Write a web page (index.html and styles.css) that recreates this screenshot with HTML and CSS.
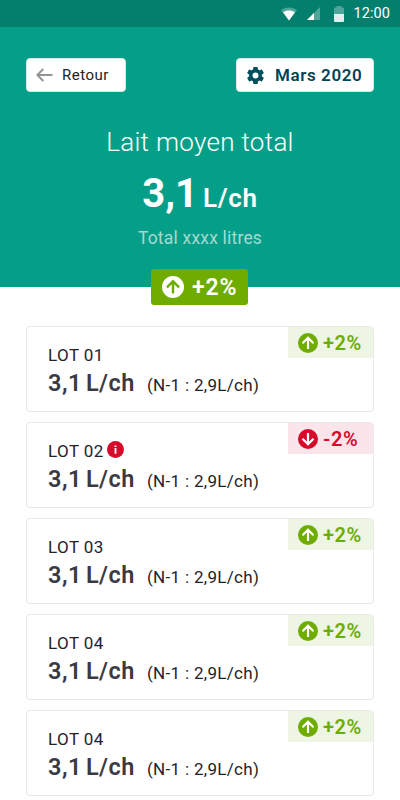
FILE: index.html
```html
<!DOCTYPE html>
<html lang="fr">
<head>
  <meta charset="UTF-8">
  <meta name="viewport" content="width=device-width, initial-scale=1.0">
  <title>Lait moyen total</title>
  <link rel="stylesheet" href="styles.css">
</head>
<body>
  <!-- Icônes partagées -->
  <svg class="sprite" width="0" height="0">
    <symbol id="up" viewBox="0 0 20 20">
      <circle cx="10" cy="10" r="10" fill="currentColor"/>
      <path d="M10 16V5M4.500 10.300L10 4.800L15.500 10.300" fill="none" stroke="var(--arrow)" stroke-width="2.200"/>
    </symbol>
    <symbol id="down" viewBox="0 0 20 20">
      <circle cx="10" cy="10" r="10" fill="currentColor"/>
      <path d="M10 4V15M4.500 9.700L10 15.200L15.500 9.700" fill="none" stroke="var(--arrow)" stroke-width="2.200"/>
    </symbol>
  </svg>

  <header class="hero">
    <div class="status-bar">
      <svg width="16" height="14" viewBox="0 0 16 14">
        <path d="M0 3.200C4.800-.5 11.200-.5 16 3.200L8 13.500z" fill="#fff" opacity=".3"/>
        <path d="M2 5.300C5.800 3 10.200 3 14 5.300L8 13.500z" fill="#fff"/>
      </svg>
      <svg class="signal" width="13" height="13" viewBox="0 0 13 13">
        <path d="M13 0V13H0z" fill="#fff" opacity=".3"/>
        <path d="M7 6V13H0z" fill="#fff"/>
      </svg>
      <svg class="battery" width="10" height="16" viewBox="0 0 10 16">
        <path d="M0 2.500Q0 1.500 1 1.500H2.500V0H7.500V1.500H9Q10 1.500 10 2.500V8H0z" fill="#fff" opacity=".3"/>
        <path d="M0 8H10V15Q10 16 9 16H1Q0 16 0 15z" fill="#fff" opacity=".88"/>
      </svg>
      <span class="clock">12:00</span>
    </div>

    <nav class="toolbar">
      <button class="btn btn-back">
        <svg width="17" height="14" viewBox="0 0 17 14">
          <path d="M16.500 7H1.500M7.300 1L1.300 7L7.300 13" fill="none" stroke="#949497" stroke-width="2"/>
        </svg>
        <span class="t-back">Retour</span>
      </button>
      <button class="btn btn-date">
        <svg width="17" height="17" viewBox="2.200 2 19.600 20">
          <path d="M19.430 12.980c.04-.32.07-.64.07-.98s-.03-.66-.07-.98l2.110-1.650c.19-.15.24-.42.12-.64l-2-3.460c-.12-.22-.39-.3-.61-.22l-2.490 1c-.52-.4-1.080-.73-1.690-.98l-.38-2.650A.49.49 0 0 0 14 2h-4c-.25 0-.46.18-.49.42l-.38 2.650c-.61.25-1.170.59-1.690.98l-2.490-1c-.23-.09-.49 0-.61.22l-2 3.460c-.13.22-.07.49.12.64l2.110 1.650c-.04.32-.07.65-.07.98s.03.66.07.98l-2.110 1.650c-.19.15-.24.42-.12.64l2 3.460c.12.22.39.3.61.22l2.490-1c.52.4 1.080.73 1.690.98l.38 2.650c.03.24.24.42.49.42h4c.25 0 .46-.18.49-.42l.38-2.650c.61-.25 1.170-.59 1.690-.98l2.490 1c.23.09.49 0 .61-.22l2-3.460c.12-.22.07-.49-.12-.64l-2.110-1.650zM12 15.500a3.500 3.500 0 1 1 0-7 3.500 3.500 0 0 1 0 7z" fill="#004f5c"/>
        </svg>
        <span class="t-date">Mars 2020</span>
      </button>
    </nav>

    <div class="summary">
      <h1><span class="t-title">Lait moyen total</span></h1>
      <p class="total"><span class="t-big">3,1</span><span class="t-unit">L/ch</span></p>
      <p class="litres"><span class="t-litres">Total xxxx litres</span></p>
    </div>

    <div class="trend">
      <svg width="22" height="22"><use href="#up"/></svg>
      <span class="t-trend">+2%</span>
    </div>
  </header>

  <main class="lots">
    <article class="lot">
      <div class="lot-info">
        <h2><span class="t-lot">LOT 01</span></h2>
        <p><strong><span class="t-val">3,1</span><span class="t-vunit">L/ch</span></strong><span class="t-prev">(N-1 : 2,9L/ch)</span></p>
      </div>
      <div class="tag"><svg width="20" height="20"><use href="#up"/></svg><span>+2%</span></div>
    </article>
    <article class="lot">
      <div class="lot-info">
        <h2><span class="t-lot">LOT 02</span>
          <svg class="info" width="17" height="17" viewBox="0 0 17 17">
            <circle cx="8.500" cy="8.500" r="8.500" fill="#d80a2c"/>
            <path d="M7.600 4.400H9.400V6H7.600zM7.600 7H9.400V12.700H7.600z" fill="#fff"/>
          </svg>
        </h2>
        <p><strong><span class="t-val">3,1</span><span class="t-vunit">L/ch</span></strong><span class="t-prev">(N-1 : 2,9L/ch)</span></p>
      </div>
      <div class="tag tag-down"><svg width="20" height="20"><use href="#down"/></svg><span>-2%</span></div>
    </article>
    <article class="lot">
      <div class="lot-info">
        <h2><span class="t-lot">LOT 03</span></h2>
        <p><strong><span class="t-val">3,1</span><span class="t-vunit">L/ch</span></strong><span class="t-prev">(N-1 : 2,9L/ch)</span></p>
      </div>
      <div class="tag"><svg width="20" height="20"><use href="#up"/></svg><span>+2%</span></div>
    </article>
    <article class="lot">
      <div class="lot-info">
        <h2><span class="t-lot">LOT 04</span></h2>
        <p><strong><span class="t-val">3,1</span><span class="t-vunit">L/ch</span></strong><span class="t-prev">(N-1 : 2,9L/ch)</span></p>
      </div>
      <div class="tag"><svg width="20" height="20"><use href="#up"/></svg><span>+2%</span></div>
    </article>
    <article class="lot">
      <div class="lot-info">
        <h2><span class="t-lot">LOT 04</span></h2>
        <p><strong><span class="t-val">3,1</span><span class="t-vunit">L/ch</span></strong><span class="t-prev">(N-1 : 2,9L/ch)</span></p>
      </div>
      <div class="tag"><svg width="20" height="20"><use href="#up"/></svg><span>+2%</span></div>
    </article>
  </main>
</body>
</html>
```
FILE: styles.css
```css
* {
  box-sizing: border-box;
}
body {
  margin: 0;
  height: 800px;
  overflow: hidden;
  background: #fff;
  color: #22222c;
  font-family: Roboto, sans-serif;
}
h1, h2, p {
  margin: 0;
  font-weight: 400;
}
svg {
  display: block;
  flex: none;
}
span {
  white-space: nowrap;
}
.sprite {
  position: absolute;
}

/* Header */
.hero {
  height: 287px;
  background: #059f89;
  color: #fff;
}
.status-bar {
  height: 27px;
  padding-right: 10px;
  background: #047f6e;
  display: flex;
  align-items: center;
  justify-content: flex-end;
}
.signal {
  margin-left: 10px;
}
.battery {
  margin: 0 9px 0 14px;
}
.clock {
  font-size: 14.5px;
  letter-spacing: 0.1px;
}
.toolbar {
  display: flex;
  justify-content: space-between;
  padding: 31px 26px 0;
}
.btn {
  height: 34px;
  padding: 0;
  border: 1px solid #d5ebe7;
  border-radius: 4px;
  background: #fff;
  font-family: inherit;
  display: flex;
  align-items: center;
  cursor: pointer;
}
.btn-back {
  width: 100px;
  padding-left: 9px;
  gap: 9px;
  color: #22222c;
  font-size: 15px;
}
.t-back {
  letter-spacing: 0.5px;
}
.btn-date {
  width: 138px;
  padding-left: 10px;
  gap: 11px;
  color: #004352;
  font-size: 17px;
  font-weight: 600;
}
.t-date {
  letter-spacing: 0.6px;
}
.summary {
  text-align: center;
}
.summary h1 {
  padding-top: 34px;
  font-size: 26px;
  font-weight: 300;
  line-height: 32px;
}
.t-title {
  letter-spacing: 0.3px;
}
.total {
  margin-top: 12px;
  line-height: 48px;
  display: flex;
  align-items: baseline;
  justify-content: center;
  gap: 5px;
}
.t-big {
  font-size: 40px;
  font-weight: 700;
}
.t-unit {
  font-size: 26px;
  font-weight: 600;
  letter-spacing: 0.7px;
}
.litres {
  margin-top: 6px;
  font-size: 17.5px;
  line-height: 20px;
  color: #a3dad1;
}
.t-litres {
  letter-spacing: 0.2px;
}
.trend {
  width: 97px;
  height: 36px;
  margin: 21px auto 0 151px;
  padding-left: 11px;
  border-radius: 3px;
  background: #6fac00;
  display: flex;
  align-items: center;
  gap: 8px;
  font-size: 23px;
  font-weight: 600;
  --arrow: #6fac00;
}
.t-trend {
  letter-spacing: 0.9px;
}

/* Lots */
.lots {
  padding: 39px 26px 0;
  display: flex;
  flex-direction: column;
  gap: 10px;
}
.lot {
  height: 86px;
  flex: none;
  border: 1px solid #e9e9ea;
  border-radius: 4px;
  overflow: hidden;
  display: flex;
  justify-content: space-between;
}
.lot-info {
  padding: 18px 0 0 21px;
}
.lot h2 {
  display: flex;
  align-items: center;
  gap: 3px;
  height: 20px;
  font-size: 17px;
  line-height: 20px;
}
.t-lot {
  letter-spacing: 0.4px;
}
.info {
  margin-top: -3px;
}
.lot p {
  display: flex;
  align-items: baseline;
  gap: 12px;
  margin-top: 4px;
  line-height: 28px;
}
.lot strong {
  display: flex;
  gap: 4px;
  color: #3a3a44;
  font-size: 23.5px;
  font-weight: 600;
  letter-spacing: 0.5px;
}
.t-prev {
  font-size: 17px;
  letter-spacing: 0.32px;
}
.tag {
  width: 85px;
  height: 31px;
  padding-left: 10px;
  background: #eef5e5;
  color: #6fac00;
  display: flex;
  align-items: center;
  gap: 5px;
  font-size: 20px;
  font-weight: 600;
  letter-spacing: 0.6px;
  --arrow: #fff;
}
.tag-down {
  background: #fae5ea;
  color: #d80a2c;
}
```
